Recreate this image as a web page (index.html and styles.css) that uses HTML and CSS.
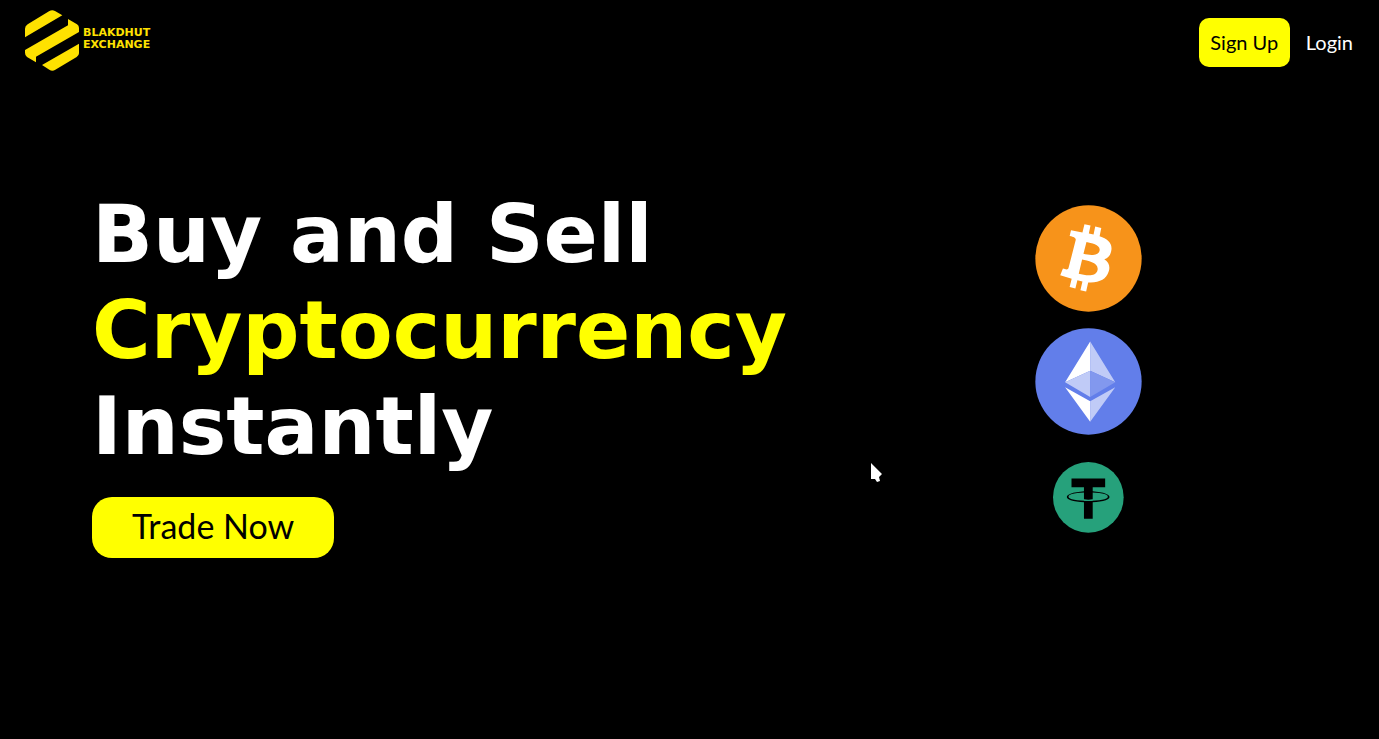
FILE: index.html
```html
<!DOCTYPE html>
<html lang="en">
<head>
<meta charset="utf-8">
<meta name="viewport" content="width=device-width, initial-scale=1">
<title>Blakdhut Exchange</title>
<link rel="stylesheet" href="styles.css">
</head>
<body>
<header class="header">
  <a class="brand" href="#">
    <svg class="brand-mark" viewBox="45 30 162 183" aria-hidden="true">
      <path d="M45 112V86Q45 78 53 73L117 34Q126 28 135 33L157 46Z"/>
      <path d="M45 150L174 76V57L201 73Q207 77 207 84V96L78 170V187L51 171Q45 167 45 158Z"/>
      <path d="M96 195L207 131V160Q207 167 200 171L136 209Q127 215 118 209Z"/>
    </svg>
    <span class="brand-name"><span>BLAKDHUT</span><span>EXCHANGE</span></span>
  </a>
  <nav class="nav">
    <button class="signup" type="button">Sign Up</button>
    <a class="login" href="#">Login</a>
  </nav>
</header>
<main class="hero">
  <section class="intro">
    <h1 class="title">Buy and Sell <span class="accent">Cryptocurrency</span> Instantly</h1>
    <button class="trade" type="button">Trade Now</button>
  </section>
  <section class="coins" aria-label="Coins">
    <svg class="coin" viewBox="30 32 318 318" role="img" aria-label="Bitcoin">
      <circle cx="189" cy="191" r="158" fill="#f7931a"/>
      <path fill="#fff" fill-rule="evenodd" d="M177 89L195 93L190 117L204 120L209 96L227 100L222 125C246 133 260 145 257 166C255 181 248 190 236 193C250 202 254 215 249 230C242 254 220 264 188 262L182 289L165 285L171 259L156 256L150 280L133 276L139 251L105 241L113 221C122 224 128 226 130 218L151 136C152 130 147 127 133 124L137 107L171 114ZM183 142L174 177C190 181 218 185 222 167C225 150 198 145 183 142ZM170 194L160 236C180 241 211 247 216 225C220 203 187 198 170 194Z"/>
    </svg>
    <svg class="coin" viewBox="29 24 320 320" role="img" aria-label="Ethereum">
      <circle cx="189" cy="184" r="159" fill="#627eea"/>
      <path fill="#fff" d="M194 64V152L119 186ZM119 201L194 243V304Z"/>
      <path fill="#c0cbf7" d="M194 64L269 186L194 152ZM194 243L269 201L194 304ZM119 186L194 152V230Z"/>
      <path fill="#8298ee" d="M194 152L269 186L194 230Z"/>
    </svg>
    <svg class="coin tether" viewBox="39 38 211 211" role="img" aria-label="Tether">
      <circle cx="144" cy="143" r="105" fill="#26a17b"/>
      <path d="M94 87H194V113H157V149Q144 151 131 149V113H94ZM131 154Q144 156 157 154V207H131Z"/>
      <path fill-rule="evenodd" d="M80 142C80 132 110 125 144 125S207 132 207 142S177 158 144 158S80 152 80 142ZM85 141C85 149 112 153 144 153S202 149 202 141S176 129 144 129S85 133 85 141Z"/>
      <path fill="#26a17b" d="M131 150Q144 152 157 150V153Q144 155 131 153Z"/>
    </svg>
  </section>
</main>
<svg class="pointer" viewBox="0 0 11 20" aria-hidden="true"><path fill="#fff" d="M0 0L11 11L8 14L9 18L6 19L4 16H0Z"/></svg>
</body>
</html>
```
FILE: styles.css
```css
* {
  box-sizing: border-box;
}

body {
  margin: 0;
  background: #000;
  color: #fff;
  font-family: "DejaVu Sans", sans-serif;
}

.header {
  display: flex;
  align-items: flex-start;
  justify-content: space-between;
  min-height: 86px;
  padding: 10px 26px 0 25px;
}

.brand {
  display: flex;
  align-items: center;
  gap: 4px;
  color: #fee100;
  text-decoration: none;
}

.brand-mark {
  width: 54px;
  height: 61px;
  fill: currentColor;
}

.brand-name {
  display: flex;
  flex-direction: column;
  padding-bottom: 3px;
  font: 700 11px/12px "DejaVu Sans", sans-serif;
}

.nav {
  display: flex;
  align-items: center;
  gap: 16px;
  padding-top: 8px;
}

.signup,
.trade {
  border: 0;
  background: #ff0;
  color: #000;
  cursor: pointer;
}

.signup,
.login,
.trade {
  font-family: Lato, sans-serif;
}

.signup {
  min-width: 91px;
  height: 49px;
  padding: 0 11px 2px;
  border-radius: 10px;
  font-size: 20px;
}

.login {
  padding-bottom: 2px;
  color: #fff;
  font-size: 20px;
  text-decoration: none;
}

.hero {
  display: grid;
  grid-template-columns: 1.212fr 1fr;
  padding: 101px 0 100px 92px;
}

.title {
  margin: 0 0 22px;
  font-size: 80px;
  line-height: 96px;
  font-weight: 700;
}

.accent {
  color: #ff0;
}

.trade {
  min-width: 242px;
  height: 61px;
  padding: 0 40px 4px;
  border-radius: 20px;
  font-size: 34px;
}

.coins {
  display: flex;
  flex-direction: column;
  align-items: center;
  gap: 16px;
  padding-top: 18px;
}

.coin {
  width: 107px;
  height: 107px;
}

.tether {
  width: 71px;
  height: 71px;
  margin-top: 11px;
}

.pointer {
  position: absolute;
  top: 463px;
  left: 871px;
  width: 11px;
  height: 20px;
}
```
